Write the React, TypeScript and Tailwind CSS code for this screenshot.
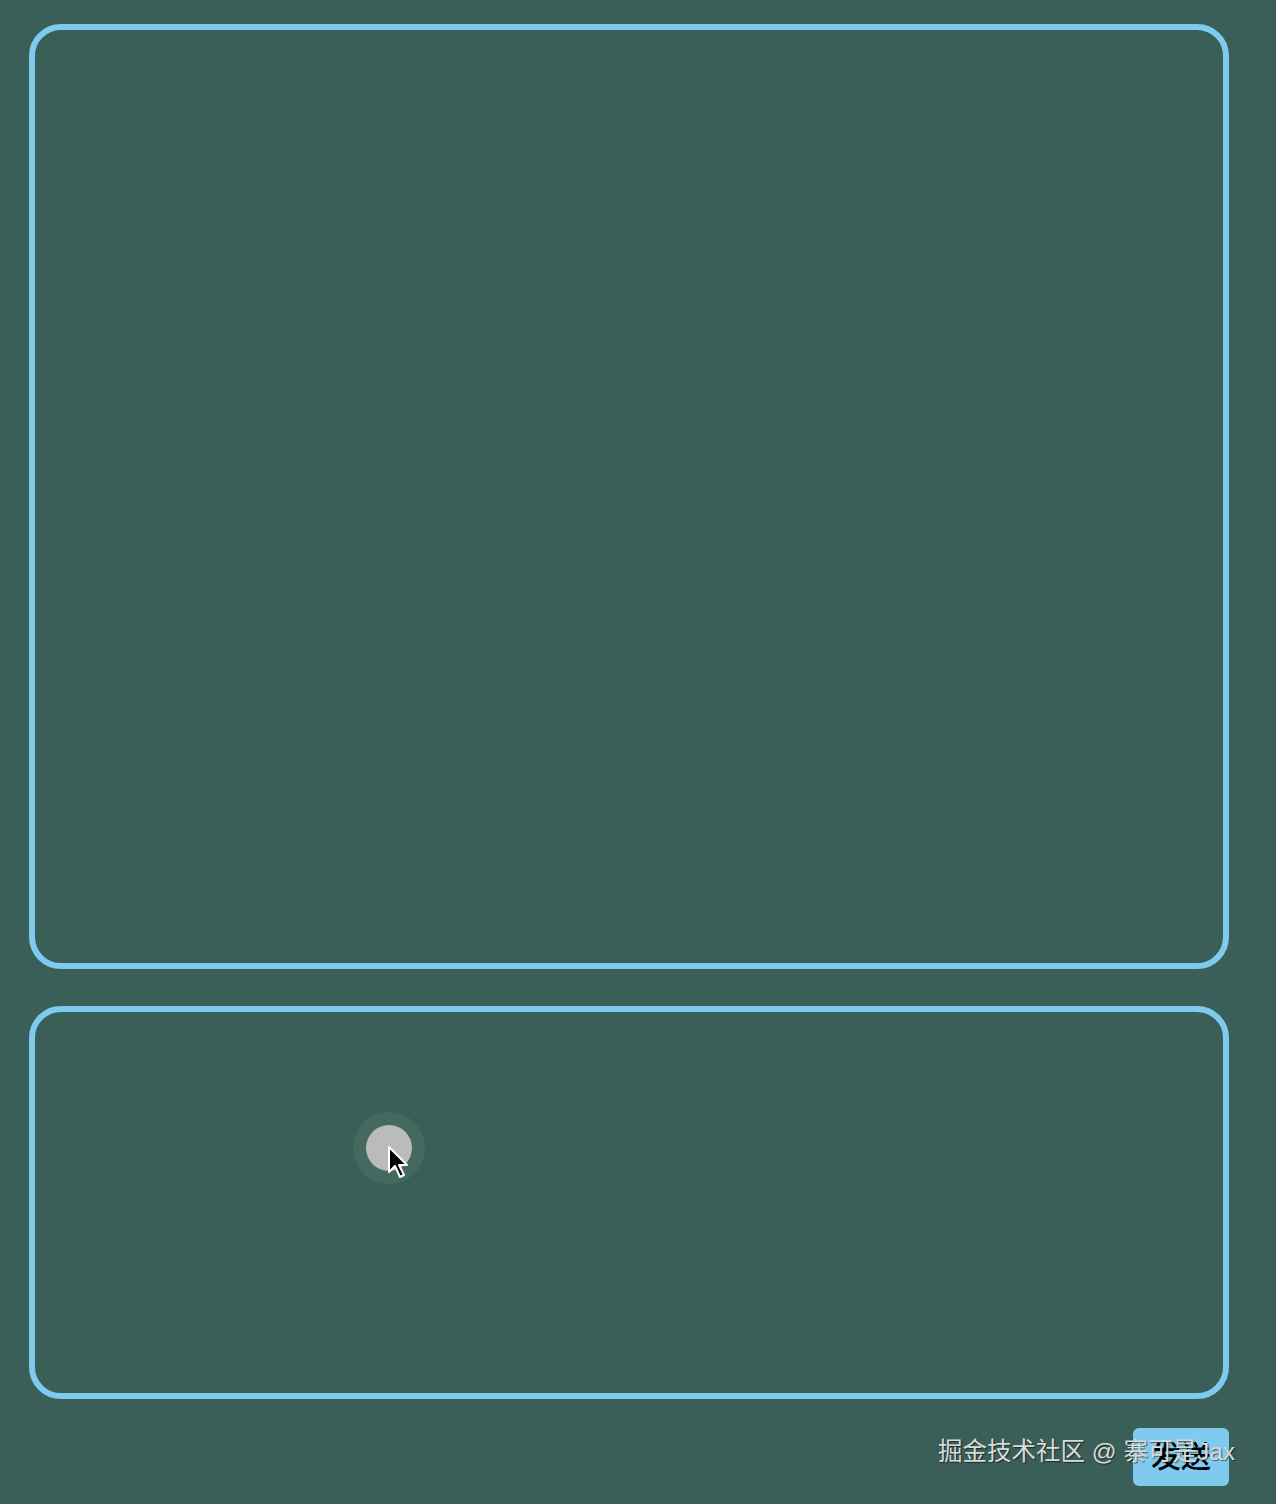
import React from "react";

export default function App() {
  return (
    <div className="relative min-h-[1504px] w-full bg-[#395f58] font-['Liberation_Sans','Noto_Sans_CJK_SC',sans-serif]">
      <div className="flex w-[1200px] flex-col pl-[29px] pt-[24px] box-content">
        <div className="h-[945px] w-[1200px] rounded-[32px] border-[6px] border-[#7ecbef]" />
        <div className="relative mt-[37px] h-[393px] w-[1200px] rounded-[32px] border-[6px] border-[#7ecbef]">
          {/* click indicator */}
          <div className="absolute left-[318px] top-[100px] flex h-[72px] w-[72px] items-center justify-center rounded-full bg-[#44695f]">
            <div className="h-[46px] w-[46px] rounded-full bg-[#b9bcba]" />
          </div>
          <svg className="absolute left-[352px] top-[133px]" width="24" height="36" viewBox="0 0 24 36">
            <path d="M2 2 L2 27 L8 21 L13 32 L17 30 L12 20 L20 20 Z" fill="#000" stroke="#fff" strokeWidth="2" strokeLinejoin="round" />
          </svg>
        </div>
        <div className="mt-[29px] flex justify-end">
          <button
            type="button"
            className="h-[58px] w-[96px] rounded-[6px] bg-[#7ecbef] text-[30px] font-medium leading-none text-black"
          >
            发送
          </button>
        </div>
      </div>
      <div className="pointer-events-none absolute left-[938px] top-[1440px] text-[24.5px] leading-none text-[#dadada] [text-shadow:1px_1px_1px_rgba(0,0,0,0.55)]">
        掘金技术社区 @ 寨可是Jax
      </div>
    </div>
  );
}
